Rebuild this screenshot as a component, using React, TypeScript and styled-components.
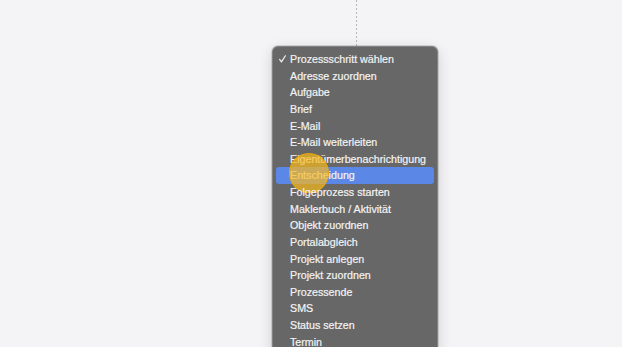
import * as React from 'react';
import styled, { createGlobalStyle } from 'styled-components';

const GlobalStyle = createGlobalStyle`
  html, body {
    margin: 0;
    padding: 0;
    background: #f4f4f6;
  }
`;

const Stage = styled.div`
  width: 622px;
  height: 347px;
  overflow: hidden;
  display: flex;
  padding-left: 272px;
  box-sizing: border-box;
  font-family: 'Liberation Sans', Arial, sans-serif;
`;

const Column = styled.div`
  display: flex;
  flex-direction: column;
`;

const Connector = styled.div`
  flex: none;
  width: 1px;
  height: 46px;
  margin-left: 84px;
  background: repeating-linear-gradient(
    to bottom,
    #b9b9bc 0,
    #b9b9bc 2px,
    transparent 2px,
    transparent 4px
  );
`;

const Menu = styled.ul`
  flex: none;
  width: 166px;
  margin: 0;
  padding: 5px 4px 0;
  box-sizing: border-box;
  list-style: none;
  background: #676767;
  border-radius: 6px 6px 0 0;
  box-shadow: inset 0 0 0 1px rgba(255, 255, 255, 0.18),
    0 0 0 1px rgba(0, 0, 0, 0.12), 0 4px 14px rgba(0, 0, 0, 0.16);
`;

const Item = styled.li<{ $active?: boolean }>`
  position: relative;
  display: flex;
  align-items: center;
  height: 16.63px;
  padding-left: 3px;
  border-radius: 3px;
  background: ${(p) => (p.$active ? '#5b88e6' : 'transparent')};
  color: #f3f3f3;
  font-size: 10.7px;
  line-height: 16.63px;
  white-space: nowrap;
  -webkit-text-stroke: 0.2px #f3f3f3;
`;

const Check = styled.span`
  width: 11px;
  display: flex;
  align-items: center;
`;

const Cursor = styled.span`
  position: absolute;
  left: 13px;
  top: -14px;
  width: 40px;
  height: 40px;
  box-sizing: border-box;
  border-radius: 50%;
  background: rgba(249, 185, 28, 0.7);
  border: 1.5px solid rgba(238, 168, 0, 0.9);
  pointer-events: none;
`;

const items = [
  'Prozessschritt wählen',
  'Adresse zuordnen',
  'Aufgabe',
  'Brief',
  'E-Mail',
  'E-Mail weiterleiten',
  'Eigentümerbenachrichtigung',
  'Entscheidung',
  'Folgeprozess starten',
  'Maklerbuch / Aktivität',
  'Objekt zuordnen',
  'Portalabgleich',
  'Projekt anlegen',
  'Projekt zuordnen',
  'Prozessende',
  'SMS',
  'Status setzen',
  'Termin',
];

const App: React.FC = () => (
  <>
    <GlobalStyle />
    <Stage>
      <Column>
        <Connector />
        <Menu>
          {items.map((label, i) => (
            <Item key={label} $active={label === 'Entscheidung'}>
              <Check>
                {i === 0 && (
                  <svg width="7" height="8" viewBox="0 0 7 8">
                    <path
                      d="M0.6 4.4 L2.5 6.9 L6.4 0.8"
                      fill="none"
                      stroke="#f3f3f3"
                      strokeWidth="1.2"
                      strokeLinecap="round"
                      strokeLinejoin="round"
                    />
                  </svg>
                )}
              </Check>
              {label}
              {label === 'Entscheidung' && <Cursor />}
            </Item>
          ))}
        </Menu>
      </Column>
    </Stage>
  </>
);

export default App;
